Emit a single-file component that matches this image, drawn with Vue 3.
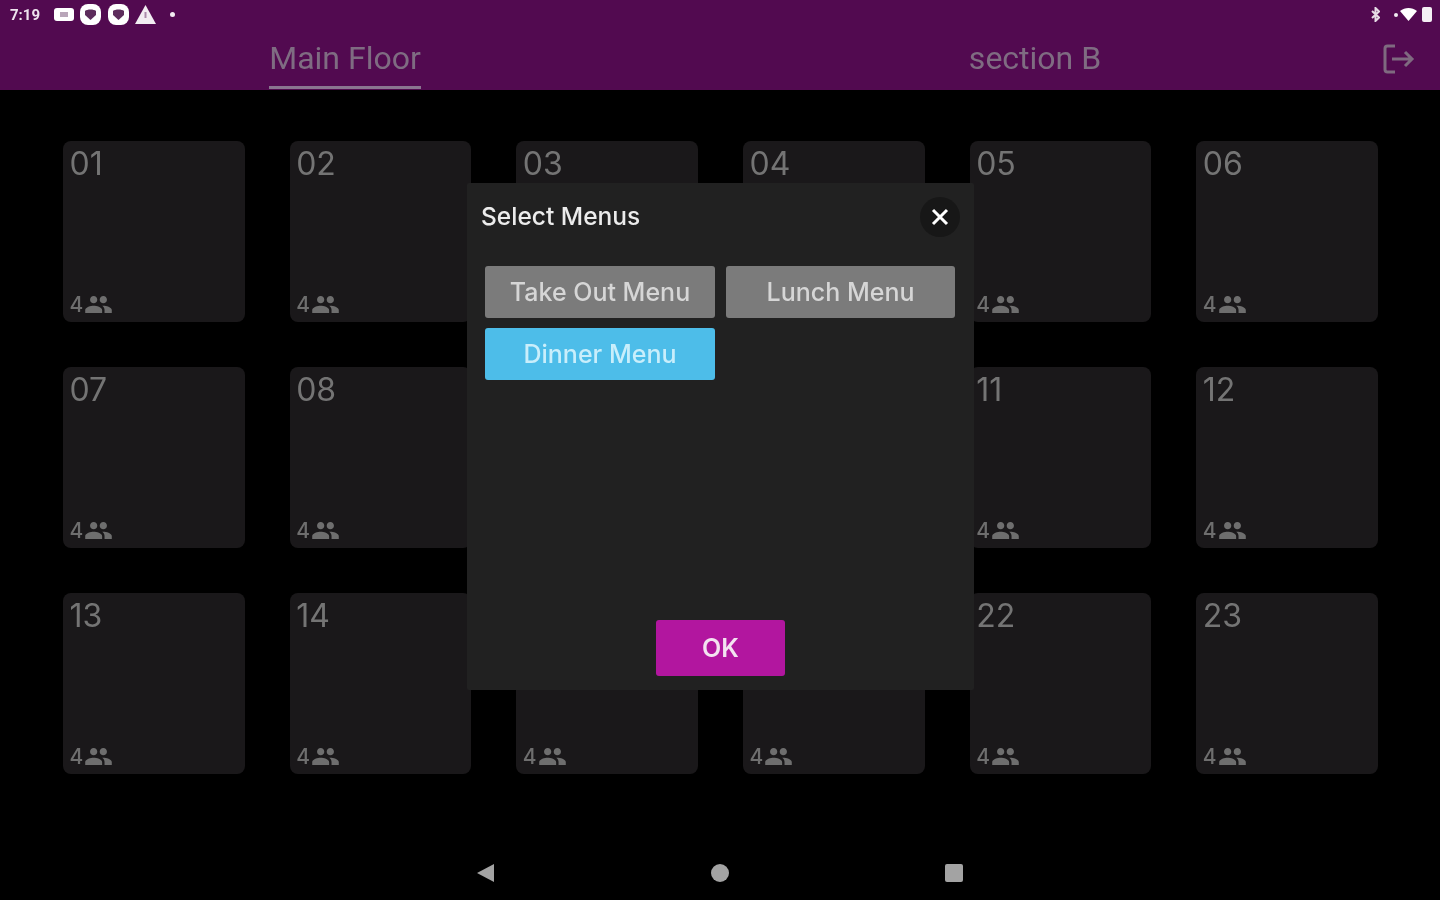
<script setup>
const tables = ['01','02','03','04','05','06','07','08','09','10','11','12','13','14','15','16','22','23']
// these parts sit fully behind the dialog
const noNumber = ['09','10','15','16']
const noSeats = ['03','04','09','10']
const menus = [
  { name: 'Take Out Menu', active: false },
  { name: 'Lunch Menu', active: false },
  { name: 'Dinner Menu', active: true }
]
const people = 'M16 11c1.66 0 2.99-1.34 2.99-3S17.66 5 16 5c-1.66 0-3 1.34-3 3s1.34 3 3 3zm-8 0c1.66 0 2.99-1.34 2.99-3S9.66 5 8 5C6.34 5 5 6.34 5 8s1.34 3 3 3zm0 2c-2.33 0-7 1.17-7 3.5V19h14v-2.500c0-2.33-4.67-3.500-7-3.500zm8 0c-.29 0-.62.02-.97.05 1.16.84 1.97 1.97 1.97 3.45V19h6v-2.500c0-2.33-4.67-3.500-7-3.500z'
</script>

<template>
  <div class="screen">
    <header class="topbar">
      <!-- Android status bar -->
      <div class="status">
        <div class="status-left">
          <span class="clock">7:19</span>
          <svg class="st-icon" width="20" height="15" viewBox="0 0 20 15"><rect x="0" y="1" width="20" height="13" rx="3" fill="#fff"/><rect x="6" y="5" width="8" height="5" fill="#b9a6b9"/></svg>
          <svg class="st-icon" width="23" height="23" viewBox="0 0 23 23"><rect x="1" y="1" width="21" height="21" rx="8" fill="#fff"/><path d="M6 8c2-2 9-2 11 0v4l-5.500 5L6 12z" fill="#5d2c5c"/></svg>
          <svg class="st-icon" width="23" height="23" viewBox="0 0 23 23"><rect x="1" y="1" width="21" height="21" rx="8" fill="#fff"/><path d="M6 8c2-2 9-2 11 0v4l-5.500 5L6 12z" fill="#5d2c5c"/></svg>
          <svg class="st-icon" width="21" height="19" viewBox="0 0 21 19"><path d="M10.500 0 21 19H0z" fill="#f2edf2"/><rect x="9.500" y="7" width="2" height="6" fill="#a98aa9"/></svg>
          <span class="dot"></span>
        </div>
        <div class="status-right">
          <svg class="bt" width="9" height="15" viewBox="0 0 9 15"><path d="M1 4 8 10.500 4.500 14V1L8 4.500 1 11" fill="none" stroke="#e6dce6" stroke-width="2"/></svg>
          <span class="dot small"></span>
          <svg width="17" height="13" viewBox="0 0 17 13"><path d="M0 3c5-4 12-4 17 0l-8.500 10z" fill="#fff"/></svg>
          <span class="battery"></span>
        </div>
      </div>

      <div class="tabs-row">
        <nav class="tabs">
          <div class="tab-cell"><span class="tab active">Main Floor</span></div>
          <div class="tab-cell"><span class="tab">section B</span></div>
        </nav>
        <svg class="logout" width="32" height="30" viewBox="0 0 32 30" fill="none" stroke="#7f6a80" stroke-width="3">
          <path d="M12 2H4.500Q2 2 2 4.500v21Q2 28 4.500 28H12"/>
          <path d="M9 15h20M22 8l7 7-7 7"/>
        </svg>
      </div>
    </header>

    <main class="floor">
      <div v-for="t in tables" :key="t" class="table-card">
        <span v-if="!noNumber.includes(t)" class="table-no">{{ t }}</span>
        <div v-if="!noSeats.includes(t)" class="seats">
          <span>4</span>
          <svg width="29" height="29" viewBox="0 0 24 24"><path :d="people" fill="#6e6e6e"/></svg>
        </div>
      </div>
    </main>

    <footer class="navbar">
      <svg width="20" height="20" viewBox="0 0 20 20"><path d="M18 1v18L1 10z" fill="#a3a3a3"/></svg>
      <svg width="20" height="20" viewBox="0 0 20 20"><circle cx="10" cy="10" r="9" fill="#a3a3a3"/></svg>
      <svg width="20" height="20" viewBox="0 0 20 20"><rect x="1" y="1" width="18" height="18" rx="2" fill="#a3a3a3"/></svg>
    </footer>

    <!-- Menu picker dialog -->
    <section class="dialog">
      <div class="dialog-head">
        <h2 class="dialog-title">Select Menus</h2>
        <button class="close-btn">
          <svg width="18" height="18" viewBox="0 0 18 18"><path d="M2 2l14 14M16 2 2 16" stroke="#fff" stroke-width="3"/></svg>
        </button>
      </div>
      <div class="menu-grid">
        <button v-for="m in menus" :key="m.name" class="menu-btn" :class="{ selected: m.active }">{{ m.name }}</button>
      </div>
      <div class="dialog-foot">
        <button class="ok-btn">OK</button>
      </div>
    </section>
  </div>
</template>

<style>
html, body {
  background: #000;
}
</style>

<style scoped>
.screen {
  position: relative;
  width: 1440px;
  height: 900px;
  display: flex;
  flex-direction: column;
  background: #000;
  overflow: hidden;
  font-family: Inter, "Open Sans", sans-serif;
  filter: blur(0.6px);
}

.topbar {
  height: 90px;
  background: #520a50;
  display: flex;
  flex-direction: column;
}

.status {
  height: 29px;
  padding: 0 8px 0 10px;
  display: flex;
  justify-content: space-between;
  align-items: center;
}

.status-left {
  display: flex;
  align-items: center;
}

.clock {
  width: 44px;
  color: #eee3ee;
  font-size: 15px;
  font-weight: 700;
  font-family: Roboto, sans-serif;
}

.st-icon {
  margin-right: 5px;
}

.dot {
  width: 5px;
  height: 5px;
  margin-left: 9px;
  border-radius: 50%;
  background: #f2edf2;
}

.status-right {
  display: flex;
  align-items: center;
  gap: 5px;
}

.bt {
  margin-right: 5px;
}

.dot.small {
  width: 4px;
  height: 4px;
  margin-left: 4px;
  margin-right: -3px;
}

.battery {
  width: 10px;
  height: 15px;
  border-radius: 2px;
  background: #f4eff4;
}

.tabs-row {
  flex: 1;
  display: flex;
  align-items: stretch;
}

.tabs {
  width: 1380px;
  display: flex;
}

.tab-cell {
  flex: 1;
  display: flex;
  justify-content: center;
}

.tab {
  padding-top: 10px;
  color: #7f6c82;
  font-family: Roboto, sans-serif;
  font-size: 32px;
  font-weight: 400;
  line-height: 38px;
}

.tab.active {
  height: 60px;
  box-sizing: border-box;
  border-bottom: 3px solid #8a7590;
}

.logout {
  margin: 15px 0 0 3px;
}

.floor {
  width: 1315px;
  margin-left: 63px;
  padding-top: 51px;
  display: grid;
  grid-template-columns: repeat(6, 1fr);
  grid-auto-rows: 181px;
  column-gap: 45px;
  row-gap: 45px;
}

.table-card {
  display: flex;
  flex-direction: column;
  padding: 4px 7px 3px 6.500px;
  box-sizing: border-box;
  background: #1a181a;
  border-radius: 8px;
}

.table-no {
  color: #747474;
  font-size: 32px;
  line-height: 38px;
}

.seats {
  margin-top: auto;
  display: flex;
  align-items: center;
  gap: 1px;
  color: #6e6e6e;
  font-size: 21px;
  font-weight: 500;
}

.navbar {
  position: absolute;
  left: 476px;
  bottom: 17px;
  width: 488px;
  display: flex;
  justify-content: space-between;
}

.dialog {
  position: absolute;
  left: 467px;
  top: 183px;
  width: 507px;
  height: 507px;
  padding: 14px 18px 14px 14px;
  box-sizing: border-box;
  display: flex;
  flex-direction: column;
  background: #212121;
  border-radius: 2px;
}

.dialog-head {
  display: flex;
  justify-content: space-between;
  align-items: center;
}

.dialog-title {
  margin: -2px 0 0;
  color: #ececec;
  font-size: 24.500px;
  font-weight: 500;
}

.close-btn {
  width: 40px;
  height: 40px;
  padding: 0;
  border: none;
  border-radius: 50%;
  background: #171717;
  margin-right: -4px;
  display: flex;
  align-items: center;
  justify-content: center;
}

.menu-grid {
  margin: 29px 0 0 4px;
  display: grid;
  grid-template-columns: 230px 229px;
  grid-auto-rows: 52px;
  column-gap: 11px;
  row-gap: 10px;
}

.menu-btn {
  padding: 0;
  border: none;
  border-radius: 3px;
  background: #7b7b7b;
  color: #d6d6d6;
  font-family: inherit;
  font-size: 25px;
  font-weight: 500;
}

.menu-btn.selected {
  background: #4dbde9;
  color: #c9eefb;
}

.dialog-foot {
  margin-top: auto;
  display: flex;
  justify-content: center;
  padding-left: 4px;
}

.ok-btn {
  width: 129px;
  height: 56px;
  border: none;
  border-radius: 3px;
  background: #b2169f;
  color: #f3e2f0;
  font-family: inherit;
  font-size: 25px;
  font-weight: 600;
}
</style>
